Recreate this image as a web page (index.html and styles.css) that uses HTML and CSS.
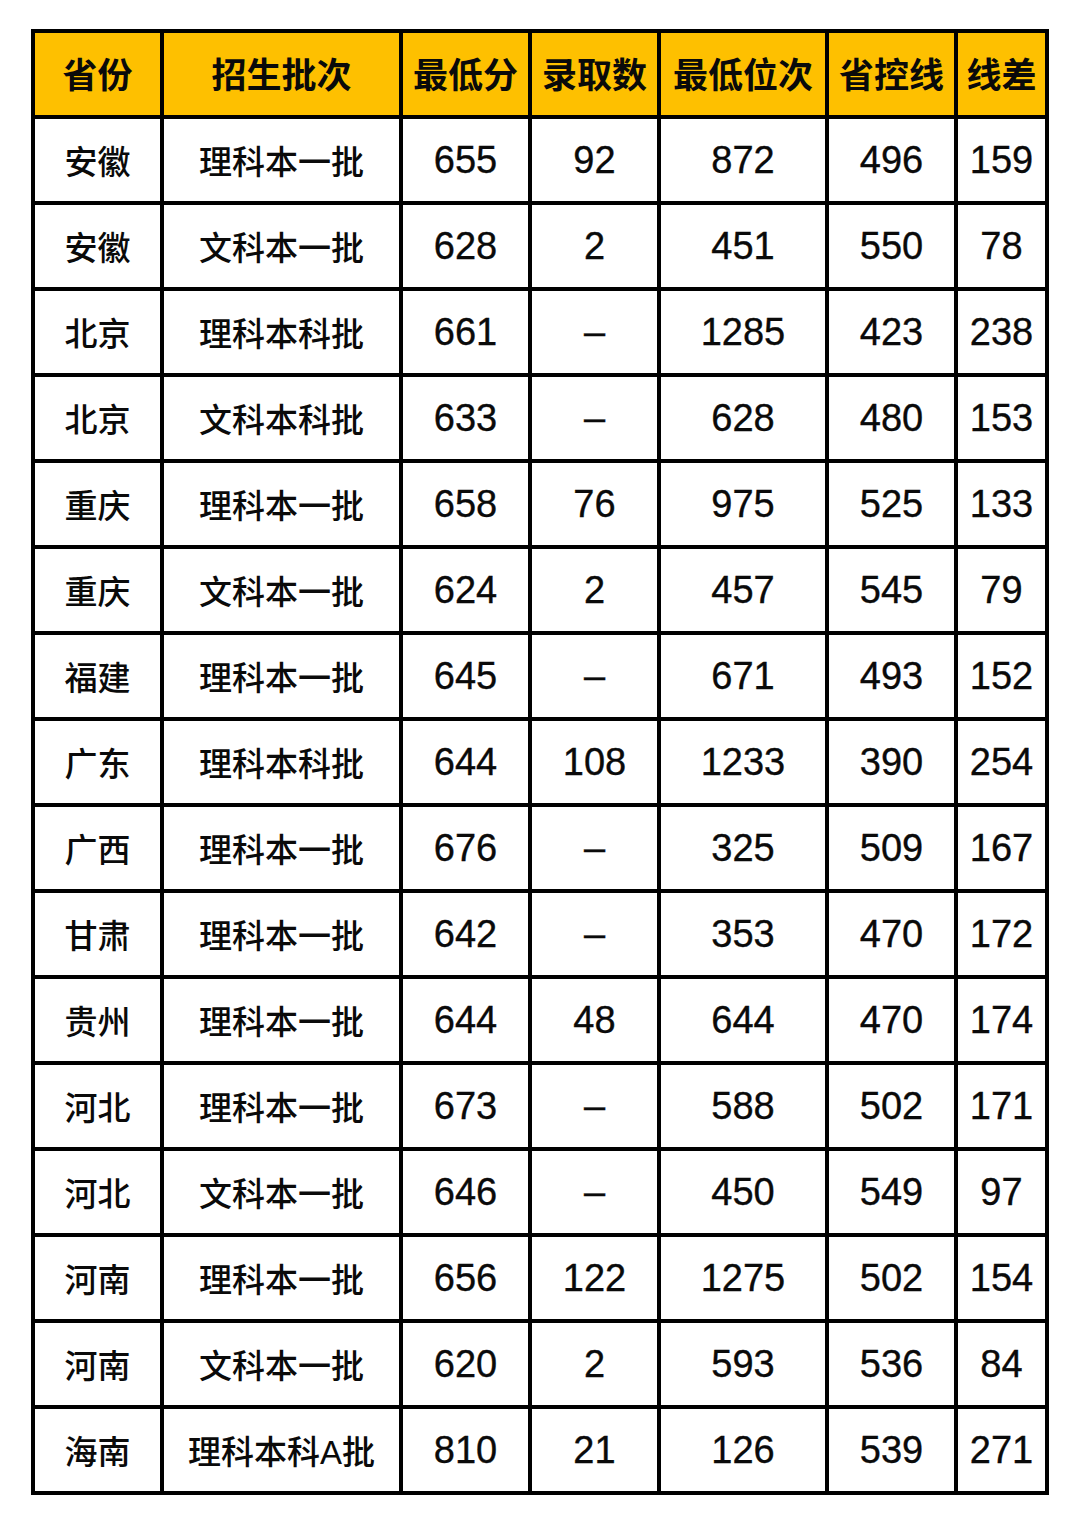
FILE: index.html
```html
<!DOCTYPE html>
<html lang="zh-CN">
<head>
<meta charset="utf-8">
<title>录取分数</title>
<link rel="stylesheet" href="styles.css">
</head>
<body>
<table class="scores">
  <colgroup>
    <col class="c-prov"><col class="c-batch"><col class="c-num"><col class="c-num"><col class="c-rank"><col class="c-num"><col class="c-diff">
  </colgroup>
  <thead>
    <tr><th>省份</th><th>招生批次</th><th>最低分</th><th>录取数</th><th>最低位次</th><th>省控线</th><th>线差</th></tr>
  </thead>
  <tbody>
    <tr><td class="cn">安徽</td><td class="cn">理科本一批</td><td>655</td><td>92</td><td>872</td><td>496</td><td>159</td></tr>
    <tr><td class="cn">安徽</td><td class="cn">文科本一批</td><td>628</td><td>2</td><td>451</td><td>550</td><td>78</td></tr>
    <tr><td class="cn">北京</td><td class="cn">理科本科批</td><td>661</td><td>–</td><td>1285</td><td>423</td><td>238</td></tr>
    <tr><td class="cn">北京</td><td class="cn">文科本科批</td><td>633</td><td>–</td><td>628</td><td>480</td><td>153</td></tr>
    <tr><td class="cn">重庆</td><td class="cn">理科本一批</td><td>658</td><td>76</td><td>975</td><td>525</td><td>133</td></tr>
    <tr><td class="cn">重庆</td><td class="cn">文科本一批</td><td>624</td><td>2</td><td>457</td><td>545</td><td>79</td></tr>
    <tr><td class="cn">福建</td><td class="cn">理科本一批</td><td>645</td><td>–</td><td>671</td><td>493</td><td>152</td></tr>
    <tr><td class="cn">广东</td><td class="cn">理科本科批</td><td>644</td><td>108</td><td>1233</td><td>390</td><td>254</td></tr>
    <tr><td class="cn">广西</td><td class="cn">理科本一批</td><td>676</td><td>–</td><td>325</td><td>509</td><td>167</td></tr>
    <tr><td class="cn">甘肃</td><td class="cn">理科本一批</td><td>642</td><td>–</td><td>353</td><td>470</td><td>172</td></tr>
    <tr><td class="cn">贵州</td><td class="cn">理科本一批</td><td>644</td><td>48</td><td>644</td><td>470</td><td>174</td></tr>
    <tr><td class="cn">河北</td><td class="cn">理科本一批</td><td>673</td><td>–</td><td>588</td><td>502</td><td>171</td></tr>
    <tr><td class="cn">河北</td><td class="cn">文科本一批</td><td>646</td><td>–</td><td>450</td><td>549</td><td>97</td></tr>
    <tr><td class="cn">河南</td><td class="cn">理科本一批</td><td>656</td><td>122</td><td>1275</td><td>502</td><td>154</td></tr>
    <tr><td class="cn">河南</td><td class="cn">文科本一批</td><td>620</td><td>2</td><td>593</td><td>536</td><td>84</td></tr>
    <tr><td class="cn">海南</td><td class="cn">理科本科A批</td><td>810</td><td>21</td><td>126</td><td>539</td><td>271</td></tr>
  </tbody>
</table>
</body>
</html>
```

FILE: styles.css
```css
html, body {
  margin: 0;
  padding: 0;
  background: #ffffff;
}

body {
  padding: 29px 0 0 31px;
}

.scores {
  border-collapse: separate;
  border-spacing: 4px;
  background: #000000;
  table-layout: fixed;
  width: 1018px;
}

.c-prov { width: 125px; }
.c-batch { width: 235px; }
.c-num { width: 125px; }
.c-rank { width: 164px; }
.c-diff { width: 87px; }

.scores th,
.scores td {
  height: 82px;
  padding: 0;
  text-align: center;
  vertical-align: middle;
  white-space: nowrap;
  color: #0a0a0a;
  box-sizing: border-box;
}

.scores th {
  background: #fec000;
  font-family: "Noto Sans CJK SC", "Noto Sans", sans-serif;
  font-weight: 700;
  font-size: 35px;
  padding-bottom: 4px;
}

.scores td {
  background: #ffffff;
  font-family: "Liberation Sans", "Noto Sans CJK SC", sans-serif;
  font-size: 38px;
  font-weight: 400;
  -webkit-text-stroke: 0.35px #0a0a0a;
}

.scores td.cn {
  font-family: "Liberation Sans", "Noto Sans CJK SC", sans-serif;
  font-size: 33px;
  font-weight: 500;
  -webkit-text-stroke: 0;
}
```
